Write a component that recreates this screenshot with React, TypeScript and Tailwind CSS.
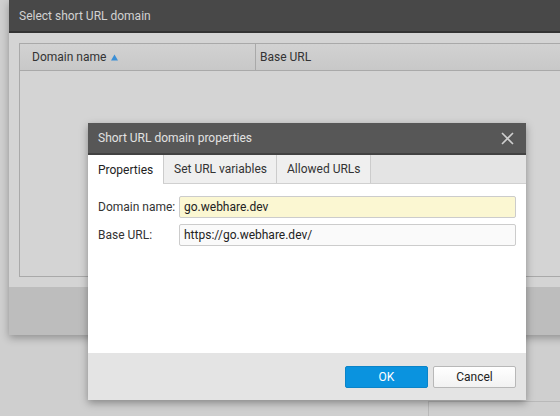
import React from "react";

export default function App() {
  return (
    <div className="relative w-[560px] h-[416px] overflow-hidden bg-[#cfcfcf] text-[12px] font-['Roboto','Liberation_Sans',sans-serif]">
      {/* far background line */}
      <div className="absolute left-[428px] top-[401px] w-[200px] h-[40px] border-l border-t border-[#b9b9b9]" />

      {/* background window */}
      <div className="absolute left-[9px] top-0 w-[640px] h-[335px] flex flex-col bg-[#d4d4d4] shadow-[0_3px_8px_rgba(0,0,0,0.3)]">
        <div className="h-[33px] shrink-0 bg-[#484848] border-b-[2px] border-[#333333] flex items-center pl-[10px] text-[#d2d2d2]">
          Select short URL domain
        </div>
        <div className="flex-1 p-[10px]">
          <div className="h-[234px] border border-[#a9a9a9] flex flex-col">
            <div className="h-[27px] flex border-b border-[#a9a9a9] bg-gradient-to-b from-[#d2d2d2] to-[#c8c8c8] text-[#333]">
              <div className="w-[236px] border-r border-[#a9a9a9] flex items-center pl-[12px]">
                Domain name
                <svg width="7" height="7" viewBox="0 0 7 7" className="ml-[5px] mt-[1px]">
                  <path d="M3.5 0.5 L7 6.5 L0 6.5 Z" fill="#3b8fd6" />
                </svg>
              </div>
              <div className="flex items-center pl-[4px]">Base URL</div>
            </div>
            <div className="flex-1" />
          </div>
        </div>
        <div className="h-[48px] shrink-0 bg-[#bdbdbd]" />
      </div>

      {/* dialog */}
      <div className="absolute left-[88px] top-[123px] w-[438px] h-[277px] flex flex-col bg-white shadow-[0_3px_8px_rgba(0,0,0,0.35)]">
        <div className="h-[32px] shrink-0 bg-[#575757] border-b-[2px] border-[#424242] flex items-center justify-between pl-[10px] pr-[12px] text-[#e2e2e2]">
          <span>Short URL domain properties</span>
          <svg width="13" height="13" viewBox="0 0 13 13">
            <path d="M1 1 L12 12 M12 1 L1 12" stroke="#cfcfcf" strokeWidth="1.6" />
          </svg>
        </div>
        <div className="h-[29px] shrink-0 flex bg-[#e4e4e4] border-b border-[#d0d0d0] text-[#333]">
          <div className="w-[75px] bg-white -mb-px flex items-center pl-[10px] text-[#222]">Properties</div>
          <div className="w-[114px] bg-[#efefef] border-l border-r border-[#cccccc] flex items-center pl-[10px]">
            Set URL variables
          </div>
          <div className="w-[94px] bg-[#efefef] border-r border-[#cccccc] flex items-center pl-[10px]">
            Allowed URLs
          </div>
        </div>
        <div className="flex-1 px-[10px] pt-[12px] flex flex-col gap-[6px]">
          <div className="flex items-center h-[22px]">
            <div className="w-[81px] text-[#333]">Domain name:</div>
            <div className="flex-1 h-[22px] bg-[#fbf7d2] border border-[#cccccc] rounded-[2px] flex items-center pl-[4px] text-[#222]">
              go.webhare.dev
            </div>
          </div>
          <div className="flex items-center h-[22px]">
            <div className="w-[81px] text-[#333]">Base URL:</div>
            <div className="flex-1 h-[22px] bg-[#fafafa] border border-[#cccccc] rounded-[2px] flex items-center pl-[4px] text-[#222]">
              https://go.webhare.dev/
            </div>
          </div>
        </div>
        <div className="h-[47px] shrink-0 bg-[#e4e4e4] flex items-center justify-end gap-[5px] pr-[10px]">
          <div className="w-[83px] h-[22px] bg-[#0a93df] border border-[#0b84c8] rounded-[2px] flex items-center justify-center text-white">
            OK
          </div>
          <div className="w-[83px] h-[22px] bg-gradient-to-b from-white to-[#f2f2f2] border border-[#b8b8b8] rounded-[2px] flex items-center justify-center text-[#222]">
            Cancel
          </div>
        </div>
      </div>
    </div>
  );
}
